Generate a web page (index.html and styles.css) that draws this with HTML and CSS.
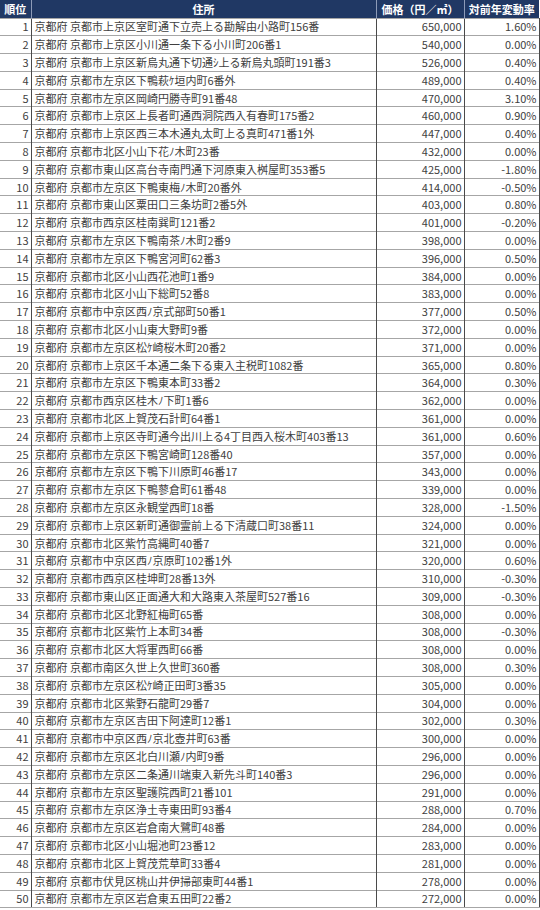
FILE: index.html
```html
<!DOCTYPE html>
<html lang="ja">
<head>
<meta charset="utf-8">
<title>地価ランキング</title>
<link rel="stylesheet" href="styles.css">
</head>
<body>
<table class="rank">
<colgroup><col class="c-rank"><col class="c-addr"><col class="c-price"><col class="c-rate"></colgroup>
<thead>
<tr><th>順位</th><th>住所</th><th>価格（円／㎡）</th><th>対前年変動率</th></tr>
</thead>
<tbody>
<tr><td class="n">1</td><td class="a">京都府 京都市上京区室町通下立売上る勘解由小路町156番</td><td class="n">650,000</td><td class="n">1.60%</td></tr>
<tr><td class="n">2</td><td class="a">京都府 京都市上京区小川通一条下る小川町206番1</td><td class="n">540,000</td><td class="n">0.00%</td></tr>
<tr><td class="n">3</td><td class="a">京都府 京都市上京区新烏丸通下切通ｼ上る新烏丸頭町191番3</td><td class="n">526,000</td><td class="n">0.40%</td></tr>
<tr><td class="n">4</td><td class="a">京都府 京都市左京区下鴨萩ｹ垣内町6番外</td><td class="n">489,000</td><td class="n">0.40%</td></tr>
<tr><td class="n">5</td><td class="a">京都府 京都市左京区岡崎円勝寺町91番48</td><td class="n">470,000</td><td class="n">3.10%</td></tr>
<tr><td class="n">6</td><td class="a">京都府 京都市上京区上長者町通西洞院西入有春町175番2</td><td class="n">460,000</td><td class="n">0.90%</td></tr>
<tr><td class="n">7</td><td class="a">京都府 京都市上京区西三本木通丸太町上る真町471番1外</td><td class="n">447,000</td><td class="n">0.40%</td></tr>
<tr><td class="n">8</td><td class="a">京都府 京都市北区小山下花ﾉ木町23番</td><td class="n">432,000</td><td class="n">0.00%</td></tr>
<tr><td class="n">9</td><td class="a">京都府 京都市東山区高台寺南門通下河原東入桝屋町353番5</td><td class="n">425,000</td><td class="n">-1.80%</td></tr>
<tr><td class="n">10</td><td class="a">京都府 京都市左京区下鴨東梅ﾉ木町20番外</td><td class="n">414,000</td><td class="n">-0.50%</td></tr>
<tr><td class="n">11</td><td class="a">京都府 京都市東山区粟田口三条坊町2番5外</td><td class="n">403,000</td><td class="n">0.80%</td></tr>
<tr><td class="n">12</td><td class="a">京都府 京都市西京区桂南巽町121番2</td><td class="n">401,000</td><td class="n">-0.20%</td></tr>
<tr><td class="n">13</td><td class="a">京都府 京都市左京区下鴨南茶ﾉ木町2番9</td><td class="n">398,000</td><td class="n">0.00%</td></tr>
<tr><td class="n">14</td><td class="a">京都府 京都市左京区下鴨宮河町62番3</td><td class="n">396,000</td><td class="n">0.50%</td></tr>
<tr><td class="n">15</td><td class="a">京都府 京都市北区小山西花池町1番9</td><td class="n">384,000</td><td class="n">0.00%</td></tr>
<tr><td class="n">16</td><td class="a">京都府 京都市北区小山下総町52番8</td><td class="n">383,000</td><td class="n">0.00%</td></tr>
<tr><td class="n">17</td><td class="a">京都府 京都市中京区西ﾉ京式部町50番1</td><td class="n">377,000</td><td class="n">0.50%</td></tr>
<tr><td class="n">18</td><td class="a">京都府 京都市北区小山東大野町9番</td><td class="n">372,000</td><td class="n">0.00%</td></tr>
<tr><td class="n">19</td><td class="a">京都府 京都市左京区松ｹ崎桜木町20番2</td><td class="n">371,000</td><td class="n">0.00%</td></tr>
<tr><td class="n">20</td><td class="a">京都府 京都市上京区千本通二条下る東入主税町1082番</td><td class="n">365,000</td><td class="n">0.80%</td></tr>
<tr><td class="n">21</td><td class="a">京都府 京都市左京区下鴨東本町33番2</td><td class="n">364,000</td><td class="n">0.30%</td></tr>
<tr><td class="n">22</td><td class="a">京都府 京都市西京区桂木ﾉ下町1番6</td><td class="n">362,000</td><td class="n">0.00%</td></tr>
<tr><td class="n">23</td><td class="a">京都府 京都市北区上賀茂石計町64番1</td><td class="n">361,000</td><td class="n">0.00%</td></tr>
<tr><td class="n">24</td><td class="a">京都府 京都市上京区寺町通今出川上る4丁目西入桜木町403番13</td><td class="n">361,000</td><td class="n">0.60%</td></tr>
<tr><td class="n">25</td><td class="a">京都府 京都市左京区下鴨宮崎町128番40</td><td class="n">357,000</td><td class="n">0.00%</td></tr>
<tr><td class="n">26</td><td class="a">京都府 京都市左京区下鴨下川原町46番17</td><td class="n">343,000</td><td class="n">0.00%</td></tr>
<tr><td class="n">27</td><td class="a">京都府 京都市左京区下鴨蓼倉町61番48</td><td class="n">339,000</td><td class="n">0.00%</td></tr>
<tr><td class="n">28</td><td class="a">京都府 京都市左京区永観堂西町18番</td><td class="n">328,000</td><td class="n">-1.50%</td></tr>
<tr><td class="n">29</td><td class="a">京都府 京都市上京区新町通御霊前上る下清蔵口町38番11</td><td class="n">324,000</td><td class="n">0.00%</td></tr>
<tr><td class="n">30</td><td class="a">京都府 京都市北区紫竹高縄町40番7</td><td class="n">321,000</td><td class="n">0.00%</td></tr>
<tr><td class="n">31</td><td class="a">京都府 京都市中京区西ﾉ京原町102番1外</td><td class="n">320,000</td><td class="n">0.60%</td></tr>
<tr><td class="n">32</td><td class="a">京都府 京都市西京区桂坤町28番13外</td><td class="n">310,000</td><td class="n">-0.30%</td></tr>
<tr><td class="n">33</td><td class="a">京都府 京都市東山区正面通大和大路東入茶屋町527番16</td><td class="n">309,000</td><td class="n">-0.30%</td></tr>
<tr><td class="n">34</td><td class="a">京都府 京都市北区北野紅梅町65番</td><td class="n">308,000</td><td class="n">0.00%</td></tr>
<tr><td class="n">35</td><td class="a">京都府 京都市北区紫竹上本町34番</td><td class="n">308,000</td><td class="n">-0.30%</td></tr>
<tr><td class="n">36</td><td class="a">京都府 京都市北区大将軍西町66番</td><td class="n">308,000</td><td class="n">0.00%</td></tr>
<tr><td class="n">37</td><td class="a">京都府 京都市南区久世上久世町360番</td><td class="n">308,000</td><td class="n">0.30%</td></tr>
<tr><td class="n">38</td><td class="a">京都府 京都市左京区松ｹ崎正田町3番35</td><td class="n">305,000</td><td class="n">0.00%</td></tr>
<tr><td class="n">39</td><td class="a">京都府 京都市北区紫野石龍町29番7</td><td class="n">304,000</td><td class="n">0.00%</td></tr>
<tr><td class="n">40</td><td class="a">京都府 京都市左京区吉田下阿達町12番1</td><td class="n">302,000</td><td class="n">0.30%</td></tr>
<tr><td class="n">41</td><td class="a">京都府 京都市中京区西ﾉ京北壺井町63番</td><td class="n">300,000</td><td class="n">0.00%</td></tr>
<tr><td class="n">42</td><td class="a">京都府 京都市左京区北白川瀬ﾉ内町9番</td><td class="n">296,000</td><td class="n">0.00%</td></tr>
<tr><td class="n">43</td><td class="a">京都府 京都市左京区二条通川端東入新先斗町140番3</td><td class="n">296,000</td><td class="n">0.00%</td></tr>
<tr><td class="n">44</td><td class="a">京都府 京都市左京区聖護院西町21番101</td><td class="n">291,000</td><td class="n">0.00%</td></tr>
<tr><td class="n">45</td><td class="a">京都府 京都市左京区浄土寺東田町93番4</td><td class="n">288,000</td><td class="n">0.70%</td></tr>
<tr><td class="n">46</td><td class="a">京都府 京都市左京区岩倉南大鷺町48番</td><td class="n">284,000</td><td class="n">0.00%</td></tr>
<tr><td class="n">47</td><td class="a">京都府 京都市北区小山堀池町23番12</td><td class="n">283,000</td><td class="n">0.00%</td></tr>
<tr><td class="n">48</td><td class="a">京都府 京都市北区上賀茂荒草町33番4</td><td class="n">281,000</td><td class="n">0.00%</td></tr>
<tr><td class="n">49</td><td class="a">京都府 京都市伏見区桃山井伊掃部東町44番1</td><td class="n">278,000</td><td class="n">0.00%</td></tr>
<tr><td class="n">50</td><td class="a">京都府 京都市左京区岩倉東五田町22番2</td><td class="n">272,000</td><td class="n">0.00%</td></tr>
</tbody>
</table>
</body>
</html>
```

FILE: styles.css
```css
html, body {
  margin: 0;
  padding: 0;
  background: #ffffff;
}
body {
  font-family: "Noto Sans CJK JP", "Noto Sans", sans-serif;
  font-size: 11px;
  color: #404040;
}
.rank {
  table-layout: fixed;
  border-collapse: collapse;
  width: 539px;
}
.c-rank { width: 31px; }
.c-addr { width: 345px; }
.c-price { width: 88px; }
.c-rate { width: 75px; }
.rank th {
  height: 17.5px;
  padding: 0;
  background: #203864;
  color: #ffffff;
  font-weight: bold;
  text-align: center;
  border-left: 1px solid #8d9bb8;
  line-height: 16px;
  white-space: nowrap;
}
.rank th:first-child { border-left: none; }
.rank td {
  height: 16.8px;
  padding: 0 2px 0 3px;
  line-height: 15px;
  border-top: 1px solid #a6a6a6;
  border-left: 1px solid #4a4a4a;
  border-right: 1px solid #4a4a4a;
  white-space: nowrap;
  overflow: hidden;
}
.rank tbody tr:last-child td { border-bottom: 1px solid #a6a6a6; }
.rank td:first-child { border-left: none; }
.rank td.n { text-align: right; }
.rank td.a { text-align: left; }
```
